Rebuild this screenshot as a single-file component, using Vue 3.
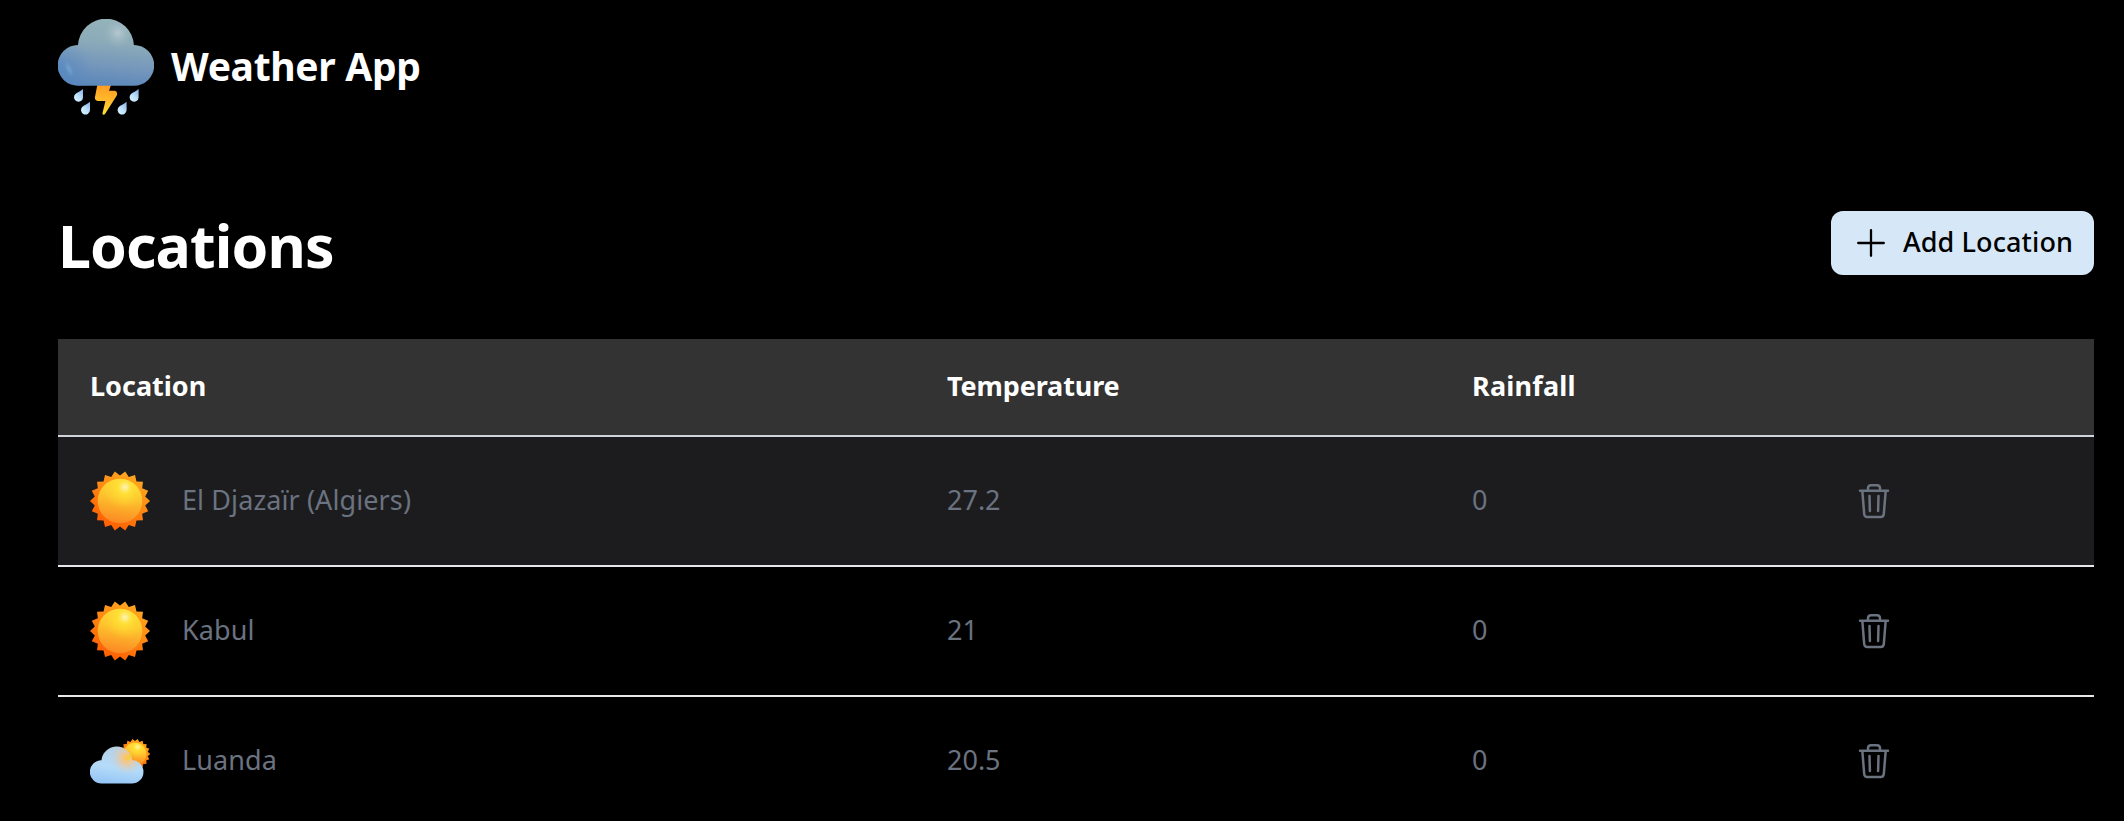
<script setup>
const locations = [
  { name: 'El Djazaïr (Algiers)', icon: 'sun', temperature: '27.2', rainfall: '0' },
  { name: 'Kabul', icon: 'sun', temperature: '21', rainfall: '0' },
  { name: 'Luanda', icon: 'partly', temperature: '20.5', rainfall: '0' },
]

// Serrated outline with 18 teeth, alternating outer and inner radius.
function rays(cx, cy, outer, inner) {
  return Array.from({ length: 36 }, (_, i) => {
    const angle = (i * Math.PI) / 18
    const r = i % 2 ? inner : outer
    return `${(cx + r * Math.cos(angle)).toFixed(2)},${(cy + r * Math.sin(angle)).toFixed(2)}`
  }).join(' ')
}
const bigRays = rays(30, 30, 30, 25.6)
const smallRays = rays(45, 23, 15.2, 12.9)
</script>

<template>
  <div class="page">
    <svg class="defs" aria-hidden="true">
      <defs>
        <linearGradient id="rayFill" x1="0.72" y1="0.08" x2="0.25" y2="0.9">
          <stop offset="0" stop-color="#ffa61f" />
          <stop offset="1" stop-color="#ff6003" />
        </linearGradient>
        <linearGradient id="discFill" x1="0.6" y1="0.1" x2="0.45" y2="1">
          <stop offset="0" stop-color="#ffd532" />
          <stop offset="0.35" stop-color="#fec42e" />
          <stop offset="1" stop-color="#fb8823" />
        </linearGradient>
        <radialGradient id="discYellow" cx="0.6" cy="0.2" r="0.48">
          <stop offset="0" stop-color="#ffe437" />
          <stop offset="0.35" stop-color="#ffe235" stop-opacity="0.8" />
          <stop offset="1" stop-color="#ffd532" stop-opacity="0" />
        </radialGradient>
        <radialGradient id="discGlow" cx="0.61" cy="0.19" r="0.17">
          <stop offset="0" stop-color="#fff3b8" />
          <stop offset="0.3" stop-color="#fff09c" stop-opacity="0.85" />
          <stop offset="1" stop-color="#ffe860" stop-opacity="0" />
        </radialGradient>
        <linearGradient id="paleCloud" x1="0.6" y1="0" x2="0.4" y2="1">
          <stop offset="0" stop-color="#b4cfe2" />
          <stop offset="0.55" stop-color="#b5dbf8" />
          <stop offset="1" stop-color="#96c6f6" />
        </linearGradient>
        <radialGradient id="warmth" gradientUnits="userSpaceOnUse" cx="37" cy="27" r="16">
          <stop offset="0" stop-color="#ffc84a" />
          <stop offset="0.35" stop-color="#f4c68e" stop-opacity="0.85" />
          <stop offset="1" stop-color="#d8cfc4" stop-opacity="0" />
        </radialGradient>
        <radialGradient id="yolk" gradientUnits="userSpaceOnUse" cx="39" cy="26" r="5">
          <stop offset="0" stop-color="#f7cf3c" />
          <stop offset="1" stop-color="#f7cf3c" stop-opacity="0" />
        </radialGradient>
        <linearGradient id="darkCloud" x1="0.6" y1="0" x2="0.45" y2="1">
          <stop offset="0" stop-color="#94b3ba" />
          <stop offset="0.35" stop-color="#8cabb9" />
          <stop offset="0.7" stop-color="#7597bb" />
          <stop offset="1" stop-color="#5b87ba" />
        </linearGradient>
        <radialGradient id="cloudGlow" gradientUnits="userSpaceOnUse" cx="60" cy="14" r="15">
          <stop offset="0" stop-color="#b5c8d1" />
          <stop offset="1" stop-color="#9bb6bd" stop-opacity="0" />
        </radialGradient>
        <radialGradient id="cloudEdge" gradientUnits="userSpaceOnUse" cx="0" cy="52" r="34">
          <stop offset="0" stop-color="#5588c1" stop-opacity="0.8" />
          <stop offset="1" stop-color="#5588c1" stop-opacity="0" />
        </radialGradient>
        <radialGradient id="glint">
          <stop offset="0" stop-color="#79a8d3" stop-opacity="0.75" />
          <stop offset="1" stop-color="#79a8d3" stop-opacity="0" />
        </radialGradient>
        <linearGradient id="boltFill" x1="0.5" y1="0" x2="0.4" y2="1">
          <stop offset="0" stop-color="#ff9a22" />
          <stop offset="0.6" stop-color="#ffc02d" />
          <stop offset="1" stop-color="#ffe232" />
        </linearGradient>
        <linearGradient id="dropFill" x1="0.85" y1="0.1" x2="0.25" y2="0.9">
          <stop offset="0" stop-color="#8fb9ea" />
          <stop offset="0.6" stop-color="#bfe2fb" />
          <stop offset="1" stop-color="#d1efff" />
        </linearGradient>
      </defs>
    </svg>

    <header class="brand">
      <svg class="logo" viewBox="0 0 96 96">
        <g fill="url(#dropFill)">
          <path d="M25 70 V78.5 A4.5 4.5 0 1 1 17.4 75 C19.5 73 22.5 72.4 25 70Z" />
          <path d="M25 70 V78.5 A4.5 4.5 0 1 1 17.4 75 C19.5 73 22.5 72.4 25 70Z" transform="translate(7 12.8)" />
          <path d="M25 70 V78.5 A4.5 4.5 0 1 1 17.4 75 C19.5 73 22.5 72.4 25 70Z" transform="translate(55.6 0)" />
          <path d="M25 70 V78.5 A4.5 4.5 0 1 1 17.4 75 C19.5 73 22.5 72.4 25 70Z" transform="translate(43.6 12.8)" />
        </g>
        <path fill="url(#boltFill)" d="M39.3 66 H53 L51 71.8 H57 Q60 72.8 58.8 76.5 L47 95 Q45.2 96.8 44.4 94.6 L47.4 82 H39.5 Q36.6 81.4 36.9 78.5Z" />
        <path fill="url(#darkCloud)" d="M20.3 66.8 A20.4 20.4 0 1 1 20 26 A28 28 0 0 1 75.9 26 A20.4 20.4 0 1 1 75.7 66.8Z" />
        <path fill="url(#cloudEdge)" d="M20.3 66.8 A20.4 20.4 0 1 1 20 26 A28 28 0 0 1 75.9 26 A20.4 20.4 0 1 1 75.7 66.8Z" />
        <path fill="url(#cloudGlow)" d="M20.3 66.8 A20.4 20.4 0 1 1 20 26 A28 28 0 0 1 75.9 26 A20.4 20.4 0 1 1 75.7 66.8Z" />
        <ellipse cx="11" cy="50" rx="3.5" ry="9" transform="rotate(-24 11 50)" fill="url(#glint)" />
      </svg>
      <span class="brand-name">Weather App</span>
    </header>

    <main>
      <div class="toolbar">
        <h1>Locations</h1>
        <button class="add" type="button">
          <svg class="plus" viewBox="0 0 28 28"><path d="M14 1.2V26.8M1.2 14H26.8" /></svg>
          <span class="add-label">Add Location</span>
        </button>
      </div>

      <section class="table">
        <div class="row head">
          <span class="text">Location</span>
          <span class="text temp">Temperature</span>
          <span class="text rain">Rainfall</span>
        </div>
        <div v-for="item in locations" :key="item.name" class="row item">
          <div class="place">
            <svg v-if="item.icon === 'sun'" class="weather" viewBox="0 0 60 60">
              <polygon :points="bigRays" fill="url(#rayFill)" />
              <circle cx="30" cy="30" r="22.3" fill="url(#discFill)" />
              <circle cx="30" cy="30" r="22.3" fill="url(#discYellow)" />
              <circle cx="30" cy="30" r="22.3" fill="url(#discGlow)" />
            </svg>
            <svg v-else class="weather" viewBox="0 0 60 60">
              <polygon :points="smallRays" fill="url(#rayFill)" />
              <circle cx="45" cy="23" r="11.3" fill="url(#discFill)" />
              <circle cx="45" cy="23" r="11.3" fill="url(#discYellow)" />
              <circle cx="45" cy="23" r="11.3" fill="url(#discGlow)" />
              <path fill="url(#paleCloud)" d="M11.7 52.6 A11.7 11.7 0 1 1 11.4 29.2 A15.4 15.4 0 0 1 42 29.2 A11.7 11.7 0 1 1 41.5 52.6Z" />
              <path fill="url(#warmth)" d="M11.7 52.6 A11.7 11.7 0 1 1 11.4 29.2 A15.4 15.4 0 0 1 42 29.2 A11.7 11.7 0 1 1 41.5 52.6Z" />
              <circle cx="39" cy="26" r="3.2" fill="url(#yolk)" />
            </svg>
            <span class="text">{{ item.name }}</span>
          </div>
          <span class="text">{{ item.temperature }}</span>
          <span class="text">{{ item.rainfall }}</span>
          <svg class="trash" viewBox="0 0 48 48">
            <path d="M10 13.7H38M12.3 13.7L14.2 37A3.2 3.2 0 0 0 17.4 40H30.6A3.2 3.2 0 0 0 33.8 37L35.7 13.7M18 13.5V11A3 3 0 0 1 21 8.2H27A3 3 0 0 1 30 11V13.5M19.5 19L19.9 34M28.5 19L28.1 34" />
          </svg>
        </div>
      </section>
    </main>
  </div>
</template>

<style>
html,
body {
  margin: 0;
  background: #000;
  overflow: hidden;
}
</style>

<style scoped>
.page {
  box-sizing: border-box;
  height: 821px;
  padding: 19px 30px 0 58px;
  overflow: hidden;
  background: #000;
  color: #fff;
  font-family: "Noto Sans", "Open Sans", sans-serif;
}
.defs {
  display: block;
  width: 0;
  height: 0;
}
.brand {
  display: flex;
  align-items: center;
  gap: 17px;
  height: 96px;
}
.logo {
  width: 96px;
  height: 96px;
}
.brand-name {
  padding-bottom: 4px;
  font-size: 39px;
  font-weight: 700;
  letter-spacing: -0.3px;
}
.toolbar {
  display: flex;
  align-items: center;
  justify-content: space-between;
  height: 64px;
  margin-top: 96px;
}
h1 {
  margin: 0;
  padding-top: 4px;
  font-size: 59px;
  font-weight: 700;
  line-height: 64px;
  letter-spacing: -0.9px;
}
.add {
  box-sizing: border-box;
  display: flex;
  align-items: center;
  width: 263px;
  height: 64px;
  padding: 0 0 0 26px;
  border: 0;
  border-radius: 12px;
  background: #d6e8f7;
  color: #000;
  font: 500 27px "Noto Sans", "Open Sans", sans-serif;
}
.plus {
  width: 28px;
  height: 28px;
  margin-right: 18px;
  fill: none;
  stroke: #000;
  stroke-width: 2.3;
  stroke-linecap: round;
}
.add-label {
  padding-bottom: 3px;
  letter-spacing: 0.1px;
  white-space: nowrap;
}
.table {
  margin-top: 64px;
}
.row {
  display: grid;
  grid-template-columns: 857px 525px 378px 1fr;
  align-items: center;
  box-sizing: border-box;
  padding-left: 32px;
  font-size: 27px;
}
.text {
  padding-bottom: 3px;
  white-space: nowrap;
}
.head {
  height: 98px;
  border-bottom: 2px solid #d1d5db;
  background: #333;
  font-weight: 700;
}
.temp {
  letter-spacing: -0.12px;
}
.rain {
  letter-spacing: 0.2px;
}
.item {
  height: 130px;
  border-bottom: 2px solid #e5e7eb;
  color: #6b7280;
}
.item:nth-child(2) {
  background: #1c1c1e;
}
.place {
  display: flex;
  align-items: center;
  gap: 32px;
  letter-spacing: 0.1px;
}
.weather {
  width: 60px;
  height: 60px;
}
.trash {
  width: 48px;
  height: 48px;
  fill: none;
  stroke: #6b7280;
  stroke-width: 2.5;
  stroke-linecap: round;
  stroke-linejoin: round;
}
</style>
